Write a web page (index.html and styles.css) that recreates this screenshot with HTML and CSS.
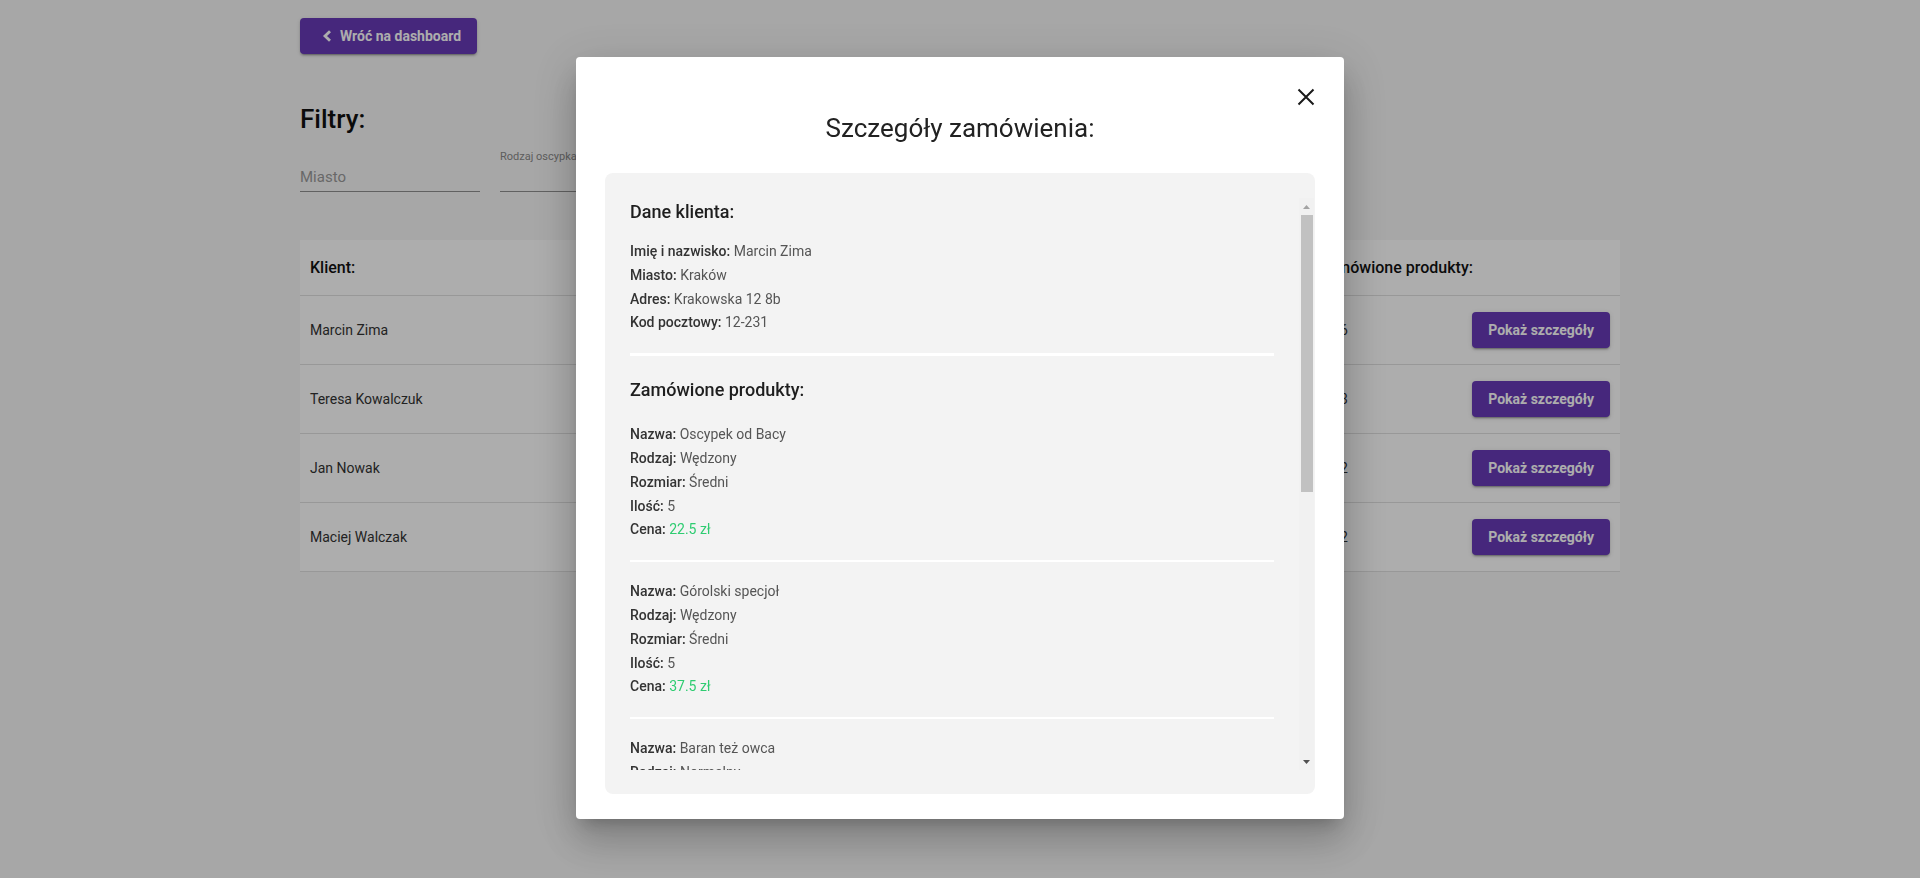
FILE: index.html
```html
<!DOCTYPE html>
<html lang="pl">
<head>
<meta charset="utf-8">
<title>Zamówienia</title>
<link rel="stylesheet" href="styles.css">
</head>
<body>
<div class="page">
  <button class="back-btn" type="button">
    <svg class="back-icon" width="10" height="12" viewBox="0 0 10 12"><polyline points="8,1.2 3,6 8,10.8" fill="none" stroke="#fff" stroke-width="2.8"/></svg>
    <span>Wróć na dashboard</span>
  </button>

  <h2 class="filters-title">Filtry:</h2>
  <div class="filters">
    <label class="field"><span class="field-label"></span><input class="field-input" type="text" placeholder="Miasto"></label>
    <label class="field"><span class="field-label">Rodzaj oscypka</span><span class="field-input"></span></label>
    <label class="field"><span class="field-label">Rozmiar oscypka</span><span class="field-input"></span></label>
    <label class="field"><span class="field-label"></span><input class="field-input" type="text" placeholder="Kod pocztowy"></label>
  </div>

  <div class="orders">
    <div class="orders-row orders-head">
      <div class="cell">Klient:</div>
      <div class="cell"></div>
      <div class="cell"></div>
      <div class="cell"></div>
      <div class="cell">Zamówione produkty:</div>
      <div class="cell"></div>
    </div>
    <div class="orders-row">
      <div class="cell">Marcin Zima</div>
      <div class="cell"></div>
      <div class="cell"></div>
      <div class="cell"></div>
      <div class="cell count">6</div>
      <div class="cell action"><button class="details-btn" type="button">Pokaż szczegóły</button></div>
    </div>
    <div class="orders-row">
      <div class="cell">Teresa Kowalczuk</div>
      <div class="cell"></div>
      <div class="cell"></div>
      <div class="cell"></div>
      <div class="cell count">3</div>
      <div class="cell action"><button class="details-btn" type="button">Pokaż szczegóły</button></div>
    </div>
    <div class="orders-row">
      <div class="cell">Jan Nowak</div>
      <div class="cell"></div>
      <div class="cell"></div>
      <div class="cell"></div>
      <div class="cell count">2</div>
      <div class="cell action"><button class="details-btn" type="button">Pokaż szczegóły</button></div>
    </div>
    <div class="orders-row">
      <div class="cell">Maciej Walczak</div>
      <div class="cell"></div>
      <div class="cell"></div>
      <div class="cell"></div>
      <div class="cell count">2</div>
      <div class="cell action"><button class="details-btn" type="button">Pokaż szczegóły</button></div>
    </div>
  </div>
</div>

<div class="overlay"></div>

<div class="modal">
  <button class="close-btn" type="button" aria-label="Zamknij">
    <svg width="18" height="18" viewBox="0 0 18 18"><path d="M1.5 1.5 L16.5 16.5 M16.5 1.5 L1.5 16.5" stroke="#1a1a1a" stroke-width="2" fill="none"/></svg>
  </button>
  <h2 class="modal-title">Szczegóły zamówienia:</h2>
  <div class="modal-box">
    <div class="modal-scroll">
      <h3 class="section-title">Dane klienta:</h3>
      <div class="info client-info">
        <p><b>Imię i nazwisko:</b> Marcin Zima</p>
        <p><b>Miasto:</b> Kraków</p>
        <p><b>Adres:</b> Krakowska 12 8b</p>
        <p><b>Kod pocztowy:</b> 12-231</p>
      </div>
      <hr class="divider">
      <h3 class="section-title products-title">Zamówione produkty:</h3>
      <div class="products">
        <div class="info product">
          <p><b>Nazwa:</b> Oscypek od Bacy</p>
          <p><b>Rodzaj:</b> Wędzony</p>
          <p><b>Rozmiar:</b> Średni</p>
          <p><b>Ilość:</b> 5</p>
          <p><b>Cena:</b> <span class="price">22.5 zł</span></p>
        </div>
        <div class="info product">
          <p><b>Nazwa:</b> Górolski specjoł</p>
          <p><b>Rodzaj:</b> Wędzony</p>
          <p><b>Rozmiar:</b> Średni</p>
          <p><b>Ilość:</b> 5</p>
          <p><b>Cena:</b> <span class="price">37.5 zł</span></p>
        </div>
        <div class="info product">
          <p><b>Nazwa:</b> Baran też owca</p>
          <p><b>Rodzaj:</b> Normalny</p>
          <p><b>Rozmiar:</b> Duży</p>
          <p><b>Ilość:</b> 2</p>
          <p><b>Cena:</b> <span class="price">18 zł</span></p>
        </div>
        <div class="info product">
          <p><b>Nazwa:</b> Redykołka</p>
          <p><b>Rodzaj:</b> Normalny</p>
          <p><b>Rozmiar:</b> Mały</p>
          <p><b>Ilość:</b> 10</p>
          <p><b>Cena:</b> <span class="price">25 zł</span></p>
        </div>
        <div class="info product">
          <p><b>Nazwa:</b> Bundz z hali</p>
          <p><b>Rodzaj:</b> Wędzony</p>
          <p><b>Rozmiar:</b> Duży</p>
          <p><b>Ilość:</b> 1</p>
          <p><b>Cena:</b> <span class="price">12 zł</span></p>
        </div>
        <div class="info product">
          <p><b>Nazwa:</b> Gołka</p>
          <p><b>Rodzaj:</b> Normalny</p>
          <p><b>Rozmiar:</b> Średni</p>
          <p><b>Ilość:</b> 3</p>
          <p><b>Cena:</b> <span class="price">15 zł</span></p>
        </div>
      </div>
    </div>
    <div class="scrollbar" aria-hidden="true">
      <div class="sb-btn">
        <svg width="7" height="4" viewBox="0 0 7 4"><polygon points="0,4 3.5,0 7,4" fill="#a3a3a3"/></svg>
      </div>
      <div class="sb-track"><div class="sb-thumb"></div></div>
      <div class="sb-btn">
        <svg width="7" height="4" viewBox="0 0 7 4"><polygon points="0,0 7,0 3.5,4" fill="#505050"/></svg>
      </div>
    </div>
  </div>
</div>
</body>
</html>
```

FILE: styles.css
```css
* { box-sizing: border-box; }

html, body {
  margin: 0;
  padding: 0;
  height: 100%;
}

body {
  background: #f7f7f7;
  font-family: Roboto, "Liberation Sans", Arial, sans-serif;
  color: #222;
  overflow: hidden;
}

.page {
  width: 1320px;
  margin: 0 auto;
  padding-top: 18px;
}

.back-btn {
  display: flex;
  align-items: center;
  gap: 8px;
  height: 36px;
  padding: 0 16px 0 22px;
  border: 0;
  border-radius: 4px;
  background: #673ab7;
  color: #fff;
  font-family: inherit;
  font-size: 14px;
  font-weight: 700;
  box-shadow: 0 3px 1px -2px rgba(0,0,0,.2), 0 2px 2px 0 rgba(0,0,0,.14), 0 1px 5px 0 rgba(0,0,0,.12);
}

.back-icon { display: block; }

.filters-title {
  margin: 50px 0 0;
  font-size: 26px;
  line-height: 30px;
  font-weight: 500;
  color: #111;
}

.filters {
  display: flex;
  gap: 20px;
  margin-top: 16px;
}

.field {
  display: flex;
  flex-direction: column;
  width: 180px;
  border-bottom: 1px solid rgba(0,0,0,.42);
}

.field-label {
  height: 13px;
  font-size: 11px;
  line-height: 13px;
  color: #8a8a8a;
}

.field-input {
  display: block;
  height: 18px;
  margin: 5px 0 5px;
  padding: 0;
  border: 0;
  outline: none;
  background: transparent;
  font-family: inherit;
  font-size: 15px;
  line-height: 18px;
  color: #333;
}

.field-input::placeholder { color: #9a9a9a; }

.orders {
  margin-top: 48px;
  background: #fff;
}

.orders-row {
  display: grid;
  grid-template-columns: 300px repeat(3, 236px) 1fr auto;
  align-items: center;
  height: 69px;
  border-bottom: 1px solid #e0e0e0;
  font-size: 14px;
  color: #333;
}

.orders-head {
  height: 56px;
  font-size: 16px;
  font-weight: 500;
  color: #111;
}

.cell {
  padding: 0 10px;
  white-space: nowrap;
}

.count { padding-left: 32px; }

.action { padding: 0 10px 0 0; }

.details-btn {
  display: block;
  height: 36px;
  padding: 0 16px;
  border: 0;
  border-radius: 4px;
  background: #673ab7;
  color: #fff;
  font-family: inherit;
  font-size: 14px;
  font-weight: 700;
  box-shadow: 0 3px 1px -2px rgba(0,0,0,.2), 0 2px 2px 0 rgba(0,0,0,.14), 0 1px 5px 0 rgba(0,0,0,.12);
}

.overlay {
  position: fixed;
  inset: 0;
  background: rgba(0,0,0,.32);
}

.modal {
  position: fixed;
  top: 57px;
  left: 50%;
  width: 768px;
  margin-left: -384px;
  padding: 56px 29px 25px;
  background: #fff;
  border-radius: 4px;
  box-shadow: 0 11px 15px -7px rgba(0,0,0,.2), 0 24px 38px 3px rgba(0,0,0,.14), 0 9px 46px 8px rgba(0,0,0,.12);
}

.close-btn {
  position: absolute;
  top: 31px;
  right: 29px;
  width: 18px;
  height: 18px;
  padding: 0;
  border: 0;
  background: transparent;
}

.close-btn svg { display: block; }

.modal-title {
  margin: 0 0 30px;
  text-align: center;
  font-size: 26px;
  line-height: 30px;
  font-weight: 400;
  color: #222;
}

.modal-box {
  display: flex;
  background: #f3f3f3;
  border-radius: 8px;
  padding: 25px 1px 24px 0;
}

.modal-scroll {
  flex: 1;
  min-width: 0;
  height: 572px;
  overflow: hidden;
  padding: 3px 25px 20px 25px;
}

.scrollbar {
  display: flex;
  flex-direction: column;
  width: 15px;
  height: 572px;
  background: #f1f1f1;
}

.sb-btn {
  display: flex;
  align-items: center;
  justify-content: center;
  height: 17px;
  flex: none;
}

.sb-btn svg { display: block; }

.sb-track {
  flex: 1;
}

.sb-thumb {
  height: 277px;
  margin: 0 1px 0 2px;
  background: #c1c1c1;
}

.section-title {
  margin: 0;
  font-size: 18px;
  line-height: 22px;
  font-weight: 500;
  color: #1e1e1e;
}

.info p {
  margin: 0;
  font-size: 14px;
  line-height: 23.8px;
  color: #555;
}

.info b {
  font-weight: 500;
  color: #333;
}

.client-info { margin-top: 17px; }

.divider {
  height: 3px;
  margin: 18px 0 0;
  border: 0;
  background: #fff;
}

.products-title { margin-top: 23px; }

.products { margin-top: 4px; }

.product {
  padding: 18px 0;
  border-bottom: 2px solid #fff;
}

.product:last-child { border-bottom: 0; }

.price { color: #2ecc71; }
```
